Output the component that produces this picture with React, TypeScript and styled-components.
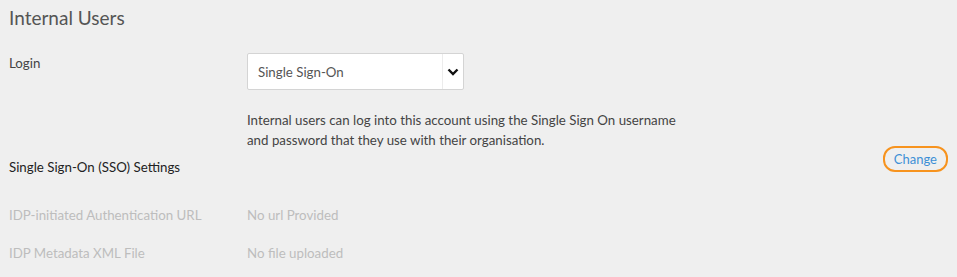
import React from 'react';
import styled, { createGlobalStyle } from 'styled-components';

const GlobalStyle = createGlobalStyle`
  html, body {
    margin: 0;
    padding: 0;
    background: #efefef;
  }
  body {
    font-family: Lato, "Open Sans", sans-serif;
  }
`;

function App() {
  return (
    <Page>
      <GlobalStyle />
      <Title>Internal Users</Title>

      <FieldRow>
        <Label>Login</Label>
        <Control>
          <SelectBox>
            <SelectValue>Single Sign-On</SelectValue>
            <SelectArrow>
              <svg width="12" height="8" viewBox="0 0 12 8">
                <polyline points="1.5,1.5 6,6 10.5,1.5" fill="none" stroke="#111" strokeWidth="2.4" />
              </svg>
            </SelectArrow>
          </SelectBox>
          <Help>
            Internal users can log into this account using the Single Sign On username
            <br />
            and password that they use with their organisation.
          </Help>
        </Control>
      </FieldRow>

      <SectionHeader>
        <SectionTitle>Single Sign-On (SSO) Settings</SectionTitle>
        <ChangeButton>Change</ChangeButton>
      </SectionHeader>

      <InfoList>
        <InfoRow>
          <Label muted>IDP-initiated Authentication URL</Label>
          <Value>No url Provided</Value>
        </InfoRow>
        <InfoRow>
          <Label muted>IDP Metadata XML File</Label>
          <Value>No file uploaded</Value>
        </InfoRow>
      </InfoList>
    </Page>
  );
}

export default App;

const Page = styled.div`
  padding: 6px 9px 0 9px;
  width: 957px;
  height: 277px;
  box-sizing: border-box;
  overflow: hidden;
`;

const Title = styled.h2`
  margin: 0;
  font-size: 19px;
  line-height: 24px;
  font-weight: 400;
  color: #555;
`;

const FieldRow = styled.div`
  display: flex;
  margin-top: 23px;
`;

const Label = styled.div<{ muted?: boolean }>`
  width: 238px;
  flex-shrink: 0;
  font-size: 13.3px;
  line-height: 20px;
  color: ${p => (p.muted ? '#bdbdbd' : '#444')};
`;

const Control = styled.div`
  display: flex;
  flex-direction: column;
`;

const SelectBox = styled.div`
  display: flex;
  align-items: stretch;
  width: 217px;
  height: 37px;
  box-sizing: border-box;
  background: #fff;
  border: 1px solid #d4d4d4;
  border-radius: 2px;
`;

const SelectValue = styled.div`
  flex: 1;
  display: flex;
  align-items: center;
  padding-left: 10px;
  font-size: 13.3px;
  color: #555;
`;

const SelectArrow = styled.div`
  width: 20px;
  display: flex;
  align-items: center;
  justify-content: center;
  border-left: 1px solid #ececec;
`;

const Help = styled.p`
  margin: 20px 0 0 0;
  font-size: 13.3px;
  line-height: 20px;
  color: #444;
`;

const SectionHeader = styled.div`
  display: flex;
  justify-content: space-between;
  align-items: flex-start;
  margin-top: -4px;
`;

const SectionTitle = styled.div`
  padding-top: 11px;
  font-size: 13.3px;
  line-height: 20px;
  color: #222;
`;

const ChangeButton = styled.button`
  height: 26px;
  padding: 0 9px;
  background: transparent;
  border: 2.5px solid #f7931e;
  border-radius: 12px;
  font-family: Lato, "Open Sans", sans-serif;
  font-size: 13px;
  color: #3d8fd6;
  cursor: pointer;
`;

const InfoList = styled.div`
  display: flex;
  flex-direction: column;
  gap: 18px;
  margin-top: 28px;
`;

const InfoRow = styled.div`
  display: flex;
`;

const Value = styled.div`
  font-size: 13.3px;
  line-height: 20px;
  color: #bdbdbd;
`;
